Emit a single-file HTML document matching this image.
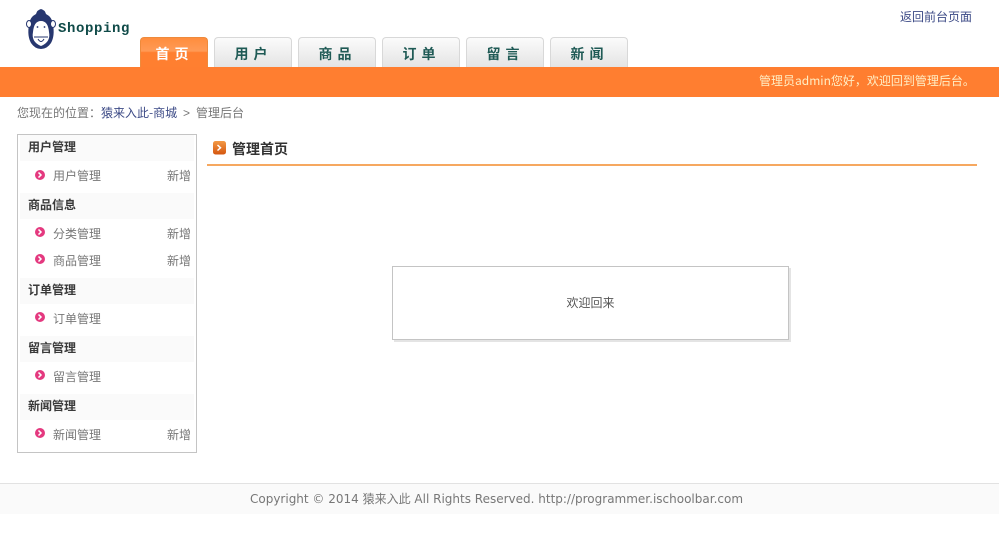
<!DOCTYPE html>
<html lang="zh">
<head>
<meta charset="utf-8">
<title>管理后台</title>
<style>
html,body{margin:0;padding:0;background:#fff}
body{width:999px;height:537px;position:relative;overflow:hidden;font:12px/16px "Liberation Sans","Noto Sans CJK SC",sans-serif;color:#666}
.a{position:absolute;white-space:nowrap}
a{color:#3c4a86;text-decoration:none}
.tab{position:absolute;top:37px;width:76px;height:29px;border:1px solid #d8d8d8;border-bottom:0;border-radius:4px 4px 0 0;background:linear-gradient(#fbfbfb,#e4e4e4);text-align:center;font:bold 14px/32px "Noto Sans CJK SC",sans-serif;letter-spacing:5px;text-indent:1px;color:#1f5a55}
.tab.on{left:140px;width:66px;border-color:#ee8a3c;background:linear-gradient(#ff8d3e 0,#ff9a56 45%,#ff7f30 50%,#ff7f30 100%);color:#fff}
.bar{position:absolute;left:0;top:67px;width:999px;height:30px;background:#ff7e30}
.side{position:absolute;left:17px;top:134px;width:178px;height:317px;border:1px solid #c4c4c4}
.h{position:absolute;left:2px;width:174px;height:26px;background:#fafafa;font-weight:bold;color:#3a3a3a;line-height:24px;padding-left:8px;box-sizing:border-box;font-family:"Noto Sans CJK SC",sans-serif}
.i{position:absolute;left:35px;color:#777;line-height:16px;font-family:"Noto Sans CJK SC",sans-serif}
.n{position:absolute;left:149px;color:#777;line-height:16px;font-family:"Noto Sans CJK SC",sans-serif}
.d{position:absolute;left:17px;width:10px;height:10px}
</style>
</head>
<body>
<svg class="a" style="left:26px;top:8px" width="30" height="42" viewBox="0 0 30 42">
<path d="M15 1 Q19 2 20 6 Q26 9 27 16 Q29 28 25 35 Q21 41 15 41 Q9 41 5 35 Q1 28 3 16 Q4 9 10 6 Q11 2 15 1 Z" fill="#27376f"/>
<ellipse cx="3" cy="16" rx="2.500" ry="3.500" fill="#fff" stroke="#27376f" stroke-width="1"/>
<ellipse cx="27" cy="16" rx="2.500" ry="3.500" fill="#fff" stroke="#27376f" stroke-width="1"/>
<path d="M15 13 Q22 13 23 24 Q25 34 15 38 Q5 34 7 24 Q8 13 15 13 Z" fill="#fff"/>
<circle cx="11.500" cy="19" r=".9" fill="#27376f"/><circle cx="18.500" cy="19" r=".9" fill="#27376f"/>
<path d="M8 29 H22 M12 31 Q15 36 18 31" fill="none" stroke="#27376f" stroke-width="1"/>
</svg>
<div class="a" style="left:58px;top:20px;font:bold 14px/18px 'Liberation Mono',monospace;color:#0f4a48;letter-spacing:0.6px">Shopping</div>
<a class="a" style="left:900px;top:9px;font-family:'Noto Sans CJK SC',sans-serif" href="#">返回前台页面</a>

<div class="tab on">首页</div>
<div class="tab" style="left:214px">用户</div>
<div class="tab" style="left:298px">商品</div>
<div class="tab" style="left:382px">订单</div>
<div class="tab" style="left:466px">留言</div>
<div class="tab" style="left:550px">新闻</div>

<div class="bar"></div>
<div class="a" style="left:759px;top:73px;color:#ffeec4;font-family:'Noto Sans CJK SC',sans-serif">管理员admin您好，欢迎回到管理后台。</div>

<div class="a" style="left:17px;top:105px;font-family:'Noto Sans CJK SC',sans-serif;color:#777">您现在的位置：</div>
<a class="a" style="left:101px;top:105px;font-family:'Noto Sans CJK SC',sans-serif" href="#">猿来入此-商城</a>
<div class="a" style="left:183px;top:105px;color:#777">&gt;</div>
<div class="a" style="left:196px;top:105px;font-family:'Noto Sans CJK SC',sans-serif;color:#777">管理后台</div>

<div class="side">
<div class="h" style="top:0">用户管理</div>
<svg class="d" style="top:35px" viewBox="0 0 10 10"><circle cx="5" cy="5" r="5" fill="#e4397f"/><path d="M3.500 2.500 6 5 3.500 7.500" fill="none" stroke="#fff" stroke-width="1.500"/></svg>
<div class="i" style="top:33px">用户管理</div><div class="n" style="top:33px">新增</div>
<div class="h" style="top:58px">商品信息</div>
<svg class="d" style="top:92px" viewBox="0 0 10 10"><circle cx="5" cy="5" r="5" fill="#e4397f"/><path d="M3.500 2.500 6 5 3.500 7.500" fill="none" stroke="#fff" stroke-width="1.500"/></svg>
<div class="i" style="top:91px">分类管理</div><div class="n" style="top:91px">新增</div>
<svg class="d" style="top:119px" viewBox="0 0 10 10"><circle cx="5" cy="5" r="5" fill="#e4397f"/><path d="M3.500 2.500 6 5 3.500 7.500" fill="none" stroke="#fff" stroke-width="1.500"/></svg>
<div class="i" style="top:118px">商品管理</div><div class="n" style="top:118px">新增</div>
<div class="h" style="top:143px">订单管理</div>
<svg class="d" style="top:177px" viewBox="0 0 10 10"><circle cx="5" cy="5" r="5" fill="#e4397f"/><path d="M3.500 2.500 6 5 3.500 7.500" fill="none" stroke="#fff" stroke-width="1.500"/></svg>
<div class="i" style="top:176px">订单管理</div>
<div class="h" style="top:201px">留言管理</div>
<svg class="d" style="top:235px" viewBox="0 0 10 10"><circle cx="5" cy="5" r="5" fill="#e4397f"/><path d="M3.500 2.500 6 5 3.500 7.500" fill="none" stroke="#fff" stroke-width="1.500"/></svg>
<div class="i" style="top:234px">留言管理</div>
<div class="h" style="top:259px">新闻管理</div>
<svg class="d" style="top:293px" viewBox="0 0 10 10"><circle cx="5" cy="5" r="5" fill="#e4397f"/><path d="M3.500 2.500 6 5 3.500 7.500" fill="none" stroke="#fff" stroke-width="1.500"/></svg>
<div class="i" style="top:292px">新闻管理</div><div class="n" style="top:292px">新增</div>
</div>

<svg class="a" style="left:213px;top:141px" width="13" height="14" viewBox="0 0 13 14">
<defs><linearGradient id="g" x1="0" y1="0" x2="0" y2="1"><stop offset="0" stop-color="#f39a45"/><stop offset="1" stop-color="#d4560f"/></linearGradient></defs>
<rect x="0" y="0" width="13" height="13.500" rx="2.500" fill="url(#g)"/>
<path d="M4.500 4 7.500 6.800 4.500 9.500" fill="none" stroke="#fff" stroke-width="1.500"/>
</svg>
<div class="a" style="left:232px;top:139px;font:bold 14px/20px 'Noto Sans CJK SC',sans-serif;color:#333">管理首页</div>
<div class="a" style="left:207px;top:164px;width:770px;height:2px;background:#f6a860"></div>

<div class="a" style="left:392px;top:266px;width:395px;height:72px;border:1px solid #c4c4c4;box-shadow:2px 2px 0 #e4e4e4;background:#fff;text-align:center;line-height:72px;color:#555;font-family:'Noto Sans CJK SC',sans-serif">欢迎回来</div>

<div class="a" style="left:0;top:483px;width:999px;height:30px;border-top:1px solid #e2e2e2;background:#fafafa;text-align:center;line-height:30px;color:#777;font-family:'DejaVu Sans','Noto Sans CJK SC',sans-serif;text-indent:-6px;font-size:12px">Copyright © 2014 猿来入此 All Rights Reserved. http://programmer.ischoolbar.com</div>
</body>
</html>
